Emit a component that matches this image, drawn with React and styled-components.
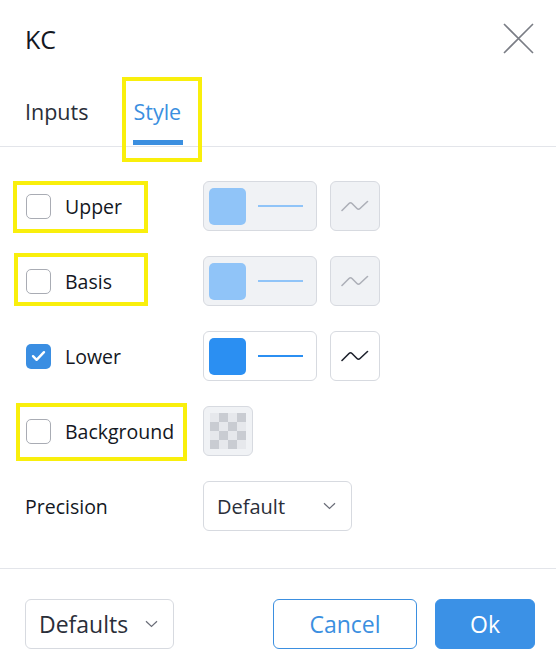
import React from "react";
import styled, { createGlobalStyle, css } from "styled-components";

const Global = createGlobalStyle`
  html, body { margin: 0; padding: 0; background: #ffffff; }
  body { font-family: "Open Sans", "Noto Sans", sans-serif; color: #131722; }
  * { box-sizing: border-box; }
`;

const Dialog = styled.div`
  width: 556px;
  height: 672px;
  background: #fff;
  display: flex;
  flex-direction: column;
`;

const Header = styled.div`
  height: 76px;
  display: flex;
  align-items: center;
  justify-content: space-between;
  padding: 0 22px 0 25px;
`;

const Title = styled.div`
  font-size: 25px;
  line-height: 1;
  padding-top: 2px;
`;

const CloseBtn = styled.div`
  width: 31px;
  height: 31px;
  display: flex;
  color: #7a7d85;
`;

const TabBar = styled.div`
  height: 71px;
  display: flex;
  gap: 45px;
  padding-left: 25px;
  border-bottom: 1px solid #e3e5ea;
`;

const Tab = styled.div`
  position: relative;
  height: 100%;
  display: flex;
  align-items: center;
  font-size: 21.5px;
  color: ${(p) => (p.$active ? "#3b8fe0" : "#2a2e39")};
  ${(p) =>
    p.$active &&
    css`
      &::after {
        content: "";
        position: absolute;
        left: 0;
        right: -2px;
        bottom: 1px;
        height: 5px;
        background: #3b8fe0;
      }
    `}
`;

const Highlight = styled.div`
  position: absolute;
  border: 4px solid #f9ef0c;
  pointer-events: none;
  z-index: 2;
`;

const Content = styled.div`
  display: flex;
  flex-direction: column;
  gap: 25px;
  padding: 34px 25px 37px;
`;

const Row = styled.div`
  display: grid;
  grid-template-columns: 178px auto;
  align-items: center;
  height: 50px;
`;

const LabelCell = styled.div`
  position: relative;
  height: 100%;
  display: flex;
  align-items: center;
  gap: 14px;
  font-size: 19.5px;
  color: #131722;
`;

const CheckBox = styled.div`
  width: 25px;
  height: 25px;
  margin-left: 1px;
  border-radius: 5px;
  border: ${(p) => (p.$checked ? "none" : "1.5px solid #a9acb4")};
  background: ${(p) => (p.$checked ? "#3a8ee2" : "#fff")};
  display: flex;
  align-items: center;
  justify-content: center;
`;

const Controls = styled.div`
  display: flex;
  gap: 13px;
`;

const ColorButton = styled.div`
  width: 114px;
  height: 50px;
  border: 1px solid #d7dae0;
  border-radius: 6px;
  background: ${(p) => (p.$disabled ? "#f0f2f5" : "#fff")};
  display: flex;
  align-items: center;
  padding-left: 5px;
  gap: 12px;
`;

const Swatch = styled.div`
  width: 37px;
  height: 37px;
  border-radius: 5px;
  background: ${(p) => p.$color};
`;

const LineSample = styled.div`
  width: 45px;
  height: 2px;
  background: ${(p) => p.$color};
`;

const IconButton = styled.div`
  width: 50px;
  height: 50px;
  border: 1px solid #d7dae0;
  border-radius: 6px;
  background: ${(p) => (p.$disabled ? "#f0f2f5" : "#fff")};
  display: flex;
  align-items: center;
  justify-content: center;
  color: ${(p) => (p.$disabled ? "#adb0b8" : "#1e222d")};
`;

const Checker = styled.div`
  width: 36px;
  height: 36px;
  background-color: #e6e8ec;
  background-image: conic-gradient(
    #c9ccd2 0 25%,
    transparent 0 50%,
    #c9ccd2 0 75%,
    transparent 0
  );
  background-size: 18px 18px;
`;

const PlainLabel = styled.div`
  font-size: 19.5px;
  color: #131722;
`;

const Select = styled.div`
  width: ${(p) => p.$width}px;
  height: 50px;
  border: 1px solid #d7dae0;
  border-radius: 6px;
  background: #fff;
  display: flex;
  align-items: center;
  justify-content: space-between;
  padding: 0 15px 0 ${(p) => p.$padLeft}px;
  font-size: ${(p) => p.$fontSize}px;
  color: #131722;
  color: #2a2e39;
`;

const Footer = styled.div`
  border-top: 1px solid #e3e5ea;
  display: flex;
  align-items: center;
  padding: 30px 21px 23px 25px;
  gap: 18px;
`;

const Spacer = styled.div`
  flex: 1;
`;

const Button = styled.div`
  height: 50px;
  width: ${(p) => p.$width}px;
  border-radius: 6px;
  display: flex;
  align-items: center;
  justify-content: center;
  font-size: 23px;
  ${(p) =>
    p.$primary
      ? css`
          background: #3b91e6;
          color: #fff;
          border: 1px solid #3b91e6;
        `
      : css`
          background: #fff;
          color: #3b8fe0;
          border: 1.5px solid #3b8fe0;
        `}
`;

const Chevron = () => (
  <svg width="13" height="8" viewBox="0 0 13 8" fill="none">
    <path d="M1 1.2l5.5 5.3 5.5-5.3" stroke="#6a6d78" strokeWidth="1.2" />
  </svg>
);

const Wave = () => (
  <svg width="28" height="12" viewBox="0 0 28 12" fill="none">
    <path
      d="M1 10.5 L8 3.5 Q9.5 2 11 3.5 L16 8.5 Q17.5 10 19 8.5 L26.5 1.5"
      stroke="currentColor"
      strokeWidth="1.6"
      strokeLinecap="round"
      strokeLinejoin="round"
    />
  </svg>
);

const Check = () => (
  <svg width="15" height="12" viewBox="0 0 15 12" fill="none">
    <path d="M2 6.2l3.6 3.6L13 2.2" stroke="#fff" strokeWidth="2.4" strokeLinecap="round" strokeLinejoin="round" />
  </svg>
);

const rows = [
  { label: "Upper", checked: false, hl: { left: -12, top: 0, width: 135, height: 52 } },
  { label: "Basis", checked: false, hl: { left: -11, top: -3, width: 134, height: 53 } },
  { label: "Lower", checked: true },
];

export default function App() {
  return (
    <>
      <Global />
      <Dialog>
        <Header>
          <Title>KC</Title>
          <CloseBtn>
            <svg width="31" height="31" viewBox="0 0 31 31" fill="none">
              <path d="M1 1L30 30M30 1L1 30" stroke="currentColor" strokeWidth="1.6" />
            </svg>
          </CloseBtn>
        </Header>
        <TabBar>
          <Tab>Inputs</Tab>
          <Tab $active>
            Style
            <Highlight style={{ left: -11, top: 1, width: 80, height: 85 }} />
          </Tab>
        </TabBar>
        <Content>
          {rows.map((r) => {
            const color = r.checked ? "#2b8ff2" : "#90c4f8";
            return (
              <Row key={r.label}>
                <LabelCell>
                  <CheckBox $checked={r.checked}>{r.checked && <Check />}</CheckBox>
                  {r.label}
                  {r.hl && <Highlight style={r.hl} />}
                </LabelCell>
                <Controls>
                  <ColorButton $disabled={!r.checked}>
                    <Swatch $color={color} />
                    <LineSample $color={color} />
                  </ColorButton>
                  <IconButton $disabled={!r.checked}>
                    <Wave />
                  </IconButton>
                </Controls>
              </Row>
            );
          })}
          <Row>
            <LabelCell>
              <CheckBox />
              Background
              <Highlight style={{ left: -9, top: -3, width: 171, height: 58 }} />
            </LabelCell>
            <Controls>
              <IconButton $disabled>
                <Checker />
              </IconButton>
            </Controls>
          </Row>
          <Row>
            <PlainLabel>Precision</PlainLabel>
            <Controls>
              <Select $width={149} $padLeft={13} $fontSize={20}>
                Default
                <Chevron />
              </Select>
            </Controls>
          </Row>
        </Content>
        <Footer>
          <Select $width={149} $padLeft={13} $fontSize={23}>
            Defaults
            <Chevron />
          </Select>
          <Spacer />
          <Button $width={144}>Cancel</Button>
          <Button $width={100} $primary>
            Ok
          </Button>
        </Footer>
      </Dialog>
    </>
  );
}
